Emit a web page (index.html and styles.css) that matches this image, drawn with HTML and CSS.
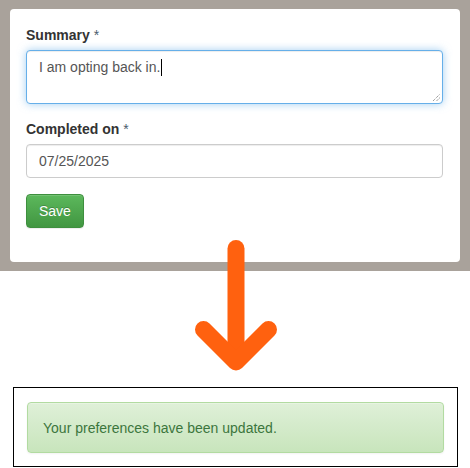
FILE: index.html
```html
<!DOCTYPE html>
<html lang="en">
<head>
    <meta charset="UTF-8">
    <title>Opt back in</title>
    <link rel="stylesheet" href="styles.css">
</head>
<body>
    <section class="backdrop">
        <div class="card">
            <div class="form-group">
                <label class="control-label">Summary <span class="req">*</span></label>
                <div class="form-control textarea focused">I am opting back in.<span class="caret"></span>
                    <svg class="grip" width="10" height="10" viewBox="0 0 10 10">
                        <path d="M2 9 L9 2 M5.5 9 L9 5.5" stroke="#777" stroke-width="1" stroke-dasharray="1 1" fill="none"/>
                    </svg>
                </div>
            </div>
            <div class="form-group">
                <label class="control-label">Completed on <span class="req">*</span></label>
                <div class="form-control">07/25/2025</div>
            </div>
            <button class="btn btn-success" type="button">Save</button>
        </div>
    </section>

    <div class="arrow-row">
        <svg class="arrow" width="90" height="136" viewBox="0 0 90 136">
            <g stroke="#ff610f" stroke-width="17" stroke-linecap="round" stroke-linejoin="round" fill="none">
                <path d="M46 10.5 L46 123"/>
                <path d="M13.5 91.5 L46 124 L78.5 91.5"/>
            </g>
        </svg>
    </div>

    <section class="result">
        <div class="alert alert-success">Your preferences have been updated.</div>
    </section>
</body>
</html>
```

FILE: styles.css
```css
/* General Styles */
* { box-sizing: border-box; }

body {
    margin: 0;
    background: #fff;
    font-family: "Liberation Sans", Arial, Helvetica, sans-serif;
    font-size: 14px;
    line-height: 20px;
    color: #333;
}

.backdrop {
    background: #a9a29b;
    padding: 9px 10px 9px 10px;
}

.card {
    background: #fff;
    border-radius: 4px;
    padding: 16px 17px 34px 16px;
}

.form-group { margin-bottom: 15px; }
.form-group + .form-group { margin-bottom: 16px; }

.control-label {
    display: block;
    font-weight: bold;
    margin-bottom: 5px;
}
.control-label .req { color: #4a5b6d; font-weight: normal; }

.form-control {
    position: relative;
    height: 34px;
    padding: 6px 12px;
    color: #555;
    background: #fff;
    border: 1px solid #ccc;
    border-radius: 4px;
    box-shadow: inset 0 1px 1px rgba(0, 0, 0, 0.075);
}
.form-control.textarea { height: 54px; }
.form-control.focused {
    border-color: #66afe9;
    box-shadow: inset 0 1px 1px rgba(0, 0, 0, 0.075), 0 0 8px rgba(102, 175, 233, 0.6);
}
.caret {
    display: inline-block;
    width: 1px;
    height: 17px;
    margin-left: 1px;
    vertical-align: -4px;
    background: #000;
}
.grip { position: absolute; right: 1px; bottom: 1px; }

.btn {
    display: block;
    height: 34px;
    padding: 6px 12px;
    font-family: inherit;
    font-size: 14px;
    line-height: 20px;
    border: 1px solid transparent;
    border-radius: 4px;
    cursor: pointer;
}
.btn-success {
    color: #fff;
    background-image: linear-gradient(to bottom, #5cb85c 0, #419641 100%);
    border-color: #3e8f3e;
    text-shadow: 0 -1px 0 rgba(0, 0, 0, 0.2);
    box-shadow: inset 0 1px 0 rgba(255, 255, 255, 0.15), 0 1px 1px rgba(0, 0, 0, 0.075);
}

.arrow-row {
    display: flex;
    justify-content: center;
    height: 116px;
}
.arrow { margin-top: -33px; }

.result {
    margin: 0 12px 0 13px;
    height: 80px;
    border: 1px solid #000;
    padding: 14px 13px 0 13px;
}
.alert {
    padding: 15px;
    border: 1px solid transparent;
    border-radius: 4px;
    height: 51px;
}
.alert-success {
    color: #3c763d;
    background-image: linear-gradient(to bottom, #dff0d8 0, #c8e5bc 100%);
    border-color: #b2dba1;
    box-shadow: inset 0 1px 0 rgba(255, 255, 255, 0.25), 0 1px 2px rgba(0, 0, 0, 0.05);
}
```
